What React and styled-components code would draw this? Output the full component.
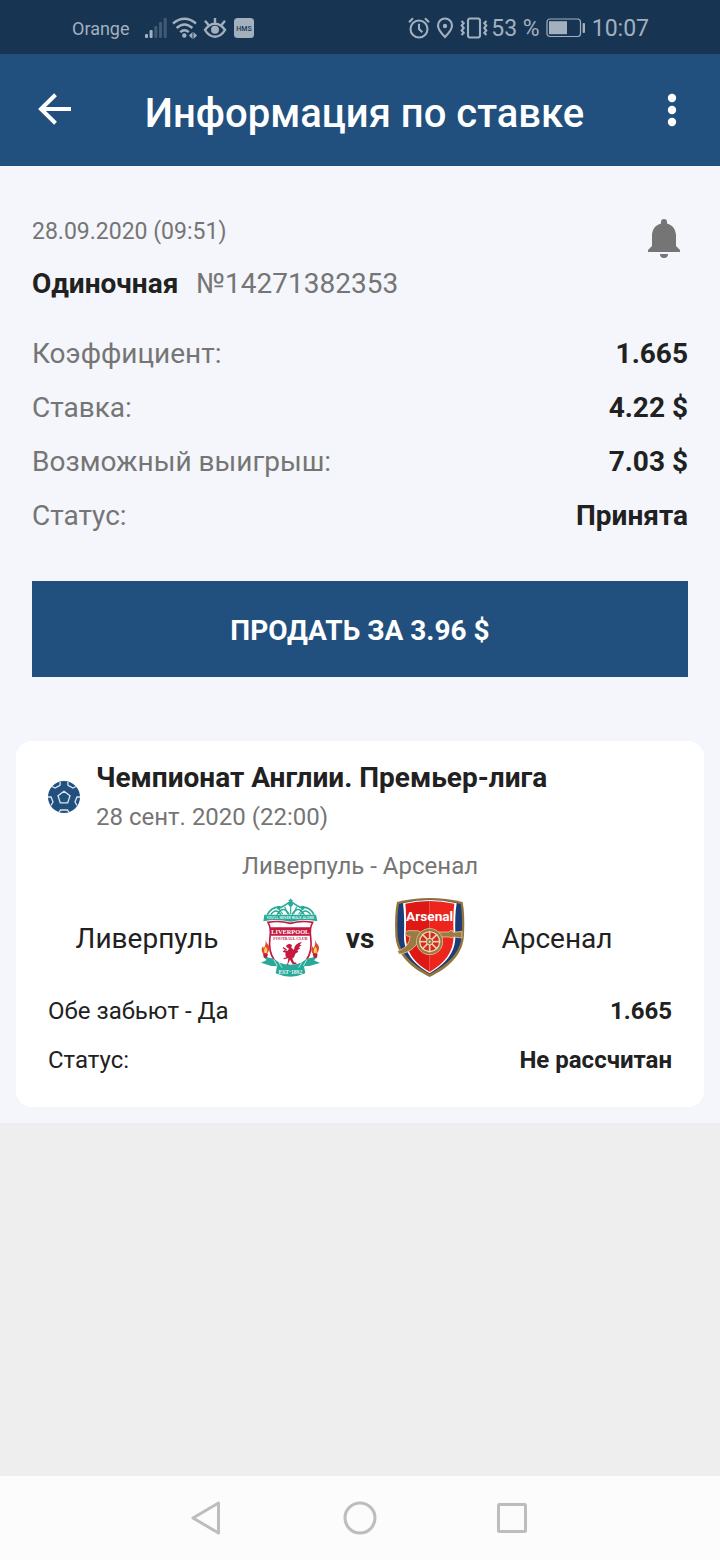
import React from 'react';
import styled, { createGlobalStyle } from 'styled-components';

const GlobalStyle = createGlobalStyle`
  * {
    box-sizing: border-box;
  }
  body {
    margin: 0;
    background-color: #eeeeee;
    font-family: Roboto, "Liberation Sans", sans-serif;
    color: #212121;
  }
`

const Screen = styled.div`
  display: flex;
  flex-direction: column;
  min-height: 100vh;
`
const StatusBar = styled.div`
  display: flex;
  align-items: center;
  justify-content: space-between;
  height: 54px;
  padding: 2px 71px 0 72px;
  background-color: #173553;
  color: #a3b0be;
`
const StatusGroup = styled.div`
  display: flex;
  align-items: center;
`
const Carrier = styled.span`
  font-size: 18px;
  margin-right: 15px;
`
const StatusText = styled.span`
  font-size: 23px;
  white-space: pre;
`
const AppBar = styled.header`
  display: flex;
  align-items: center;
  height: 112px;
  padding: 0 24px 0 31px;
  background-color: #21507f;
  color: #fff;
`
const IconButton = styled.button`
  display: flex;
  padding: 0;
  border: none;
  background: none;
  color: inherit;
  cursor: pointer;
`
const PageTitle = styled.h1`
  flex: 1;
  margin: 0;
  padding: 8px 0 0 2px;
  font-size: 40px;
  line-height: 48px;
  font-weight: 500;
  text-align: center;
`
const Content = styled.main`
  padding: 48px 16px 16px;
  background-color: #f4f6fb;
`
const BetInfo = styled.section`
  padding: 0 16px;
`
const BetHead = styled.div`
  display: flex;
  align-items: flex-start;
  justify-content: space-between;
  color: #757575;
`
const BetDate = styled.div`
  font-size: 23px;
  line-height: 36px;
`
const BetNumber = styled.div`
  display: flex;
  gap: 18px;
  margin-top: 16px;
  font-size: 28px;
  line-height: 36px;
`
const BetType = styled.span`
  font-weight: 700;
  color: #212121;
`
const Rows = styled.dl`
  margin: ${props => props.$small ? '0' : '24px 0 39px'};
  font-size: ${props => props.$small ? '24px' : '28px'};
  color: ${props => props.$small ? '#212121' : '#757575'};
`
const Row = styled.div`
  display: flex;
  align-items: center;
  justify-content: space-between;
  height: ${props => props.$small ? '49px' : '54px'};
`
const Value = styled.dd`
  margin: 0;
  font-weight: 700;
  color: #212121;
`
const SellButton = styled.button`
  width: 100%;
  height: 96px;
  padding: 2px 0 0;
  border: none;
  background-color: #21507f;
  color: #fff;
  font-family: inherit;
  font-size: 28px;
  font-weight: 700;
  cursor: pointer;
`
const Card = styled.section`
  margin-top: 64px;
  padding: 19px 32px 23px;
  border-radius: 16px;
  background-color: #fff;
`
const League = styled.div`
  display: flex;
  align-items: center;
  gap: 16px;
`
const LeagueName = styled.h2`
  margin: 0;
  font-size: 28px;
  line-height: 36px;
  font-weight: 700;
`
const GameDate = styled.div`
  margin-top: 5px;
  font-size: 24px;
  line-height: 32px;
  color: #757575;
`
const GameName = styled.div`
  margin-top: 17px;
  font-size: 24px;
  line-height: 32px;
  text-align: center;
  color: #757575;
`
const Teams = styled.div`
  display: grid;
  grid-template-columns: 1fr 80px 60px 80px 1fr;
  align-items: center;
  margin: 16px 0 8px;
  font-size: 28px;
  text-align: center;
`
const Team = styled.div`
  padding-right: ${props => props.$away ? '28px' : '4px'};
`
const Versus = styled.div`
  font-weight: 700;
`
const NavBar = styled.nav`
  display: flex;
  align-items: center;
  justify-content: center;
  gap: 104px;
  height: 84px;
  margin-top: auto;
  background-color: #fcfcfc;
  color: #bdbdbd;
`

const SignalIcon = () => (
  <svg width="22" height="22" viewBox="0 0 22 22" fill="currentColor">
    <rect x="0" y="17" width="3" height="4" rx="1" />
    <rect x="4.6" y="13" width="3" height="8" rx="1" />
    <g opacity=".3">
      <rect x="9.3" y="9" width="3" height="12" rx="1" />
      <rect x="14" y="5" width="3" height="16" rx="1" />
      <rect x="18.7" y="1" width="3" height="20" rx="1" />
    </g>
  </svg>
)

const WifiIcon = () => (
  <svg width="33" height="22" viewBox="-5 0 33 22" fill="none" stroke="currentColor" strokeWidth="2.4">
    <path d="M1 6.5Q12.5-3 24 6.5M4.6 11Q12.5 3.8 20.4 11M8.2 15.2Q12.5 11.2 16.8 15.2" />
    <circle cx="12.3" cy="18.5" r="2.2" fill="currentColor" stroke="none" />
    <path d="M17 18.5l3.500-3.500v7zM25 18.5l-3.500-3.500v7z" fill="currentColor" stroke="none" />
  </svg>
)

const EyeIcon = () => (
  <svg width="30" height="22" viewBox="-4 0 30 22" fill="none" stroke="currentColor" strokeWidth="2.4">
    <path d="M1 13Q5 6.7 11 6.7T21 13Q17 19.7 11 19.7T1 13z" />
    <circle cx="11" cy="12.7" r="4" fill="currentColor" stroke="none" />
    <path d="M11 6V1M4.5 8L1 3.8M17.5 8L21 3.8" />
  </svg>
)

const HmsIcon = () => (
  <svg width="24" height="22" viewBox="-4 0 24 22">
    <rect y="1" width="20" height="20" rx="3.5" fill="currentColor" />
    <text x="10" y="13.5" fontSize="7" fontWeight="500" textAnchor="middle" fill="#173553">HMS</text>
  </svg>
)

const AlarmIcon = () => (
  <svg width="22" height="22" viewBox="0 0 22 22" fill="none" stroke="currentColor" strokeWidth="2.1">
    <circle cx="11" cy="12" r="8.5" />
    <path d="M11 6.8V12l3.3 3.3M1 5.2L5 1.3M21 5.2L17 1.3" />
  </svg>
)

const PinIcon = () => (
  <svg width="27" height="22" viewBox="-6 0 27 22" fill="none" stroke="currentColor" strokeWidth="2.1">
    <path d="M9 20Q2 13 2 8.5a7 7 0 0 1 14 0Q16 13 9 20z" />
    <circle cx="9" cy="9" r="2.2" fill="currentColor" stroke="none" />
  </svg>
)

const VibrateIcon = () => (
  <svg width="34" height="22" viewBox="-3 0 34 22" fill="none" stroke="currentColor" strokeWidth="2.1">
    <rect x="8" y="1.500" width="12" height="19" rx="2" />
    <path d="M1.500 4l2.200 2-2 2.500 2 2.500-2 2.500 2 2.500-2.200 2M26.500 4l-2.200 2 2 2.500-2 2.500 2 2.500-2 2.500 2.200 2" />
  </svg>
)

const BatteryIcon = () => (
  <svg width="52" height="22" viewBox="-6 0 52 22">
    <rect x="1" y="2" width="33.5" height="17.5" rx="3" fill="none" stroke="currentColor" strokeWidth="1.2" />
    <rect x="3" y="4.2" width="18" height="13" fill="currentColor" />
    <rect x="36.6" y="6" width="2.4" height="10" rx="1" fill="currentColor" />
  </svg>
)

const BackIcon = () => (
  <svg width="48" height="48" viewBox="0 0 48 48" fill="none" stroke="currentColor" strokeWidth="4">
    <path d="M40 23H10M24.5 8.8L10 23l14.5 14.2" />
  </svg>
)

const MoreIcon = () => (
  <svg width="48" height="48" viewBox="0 0 48 48" fill="currentColor">
    <circle cx="24" cy="12" r="4.2" />
    <circle cx="24" cy="24" r="4.2" />
    <circle cx="24" cy="36" r="4.2" />
  </svg>
)

const BellIcon = () => (
  <svg width="48" height="48" viewBox="0 0 48 48" fill="currentColor">
    <path d="M24 5a3 3 0 0 0-3 3v1.4C15.5 10.8 12 15.5 12 21.5V32l-4 4v2h32v-2l-4-4V21.5c0-6-3.5-10.7-9-12.1V8a3 3 0 0 0-3-3zM20 40a4 4 0 0 0 8 0z" />
  </svg>
)

const BallIcon = () => (
  <svg width="32" height="32" viewBox="0 0 32 32">
    <circle cx="16" cy="16" r="16" fill="#21507f" />
    <path
      d="M16 10.3l6 4.400-2.300 7.200h-7.400L10 14.700zM4 5.500l3 1.500 5-2.700.2-3.300M28 5.500l-3 1.500-5-2.700-.2-3.300M0 16h3l2 5-2 3.500M32 16h-3l-2 5 2 3.500M11 31.200l1.600-2.200h6.800l1.600 2.200"
      fill="none"
      stroke="#dce8f2"
      strokeWidth="1.3"
    />
  </svg>
)

const LiverpoolCrest = () => (
  <svg width="80" height="80" viewBox="0 38 240 240" role="img" aria-label="Ливерпуль">
    <g fill="none" stroke="#28a999" strokeWidth="5">
      <path d="M52 88Q66 61 94 66Q108 58 122 48Q136 58 150 66Q178 61 192 88" />
      <path d="M62 88Q79 66 93 88M81 88Q100 57 118 88M126 88Q144 57 163 88M151 88Q166 66 182 88" strokeWidth="4" />
      <path d="M122 40v46M116 45h12M84 68l14 18M160 68l-14 18M104 64l9 22M140 64l-9 22" strokeWidth="3.5" />
    </g>
    <g fill="#28a999">
      <circle cx="122" cy="57" r="7" />
      <circle cx="86" cy="67" r="6" />
      <circle cx="158" cy="67" r="6" />
      <path d="M43 88H198L202 108Q161 100 122 109Q80 100 40 108z" />
    </g>
    <text x="121" y="102" fontSize="11" fontWeight="700" textAnchor="middle" fill="#d6f2ec">YOU’LL NEVER WALK ALONE</text>
    <path d="M54 111Q88 105 121 114Q154 105 188 111Q178 128 182 155Q188 200 168 226Q150 244 121 257Q91 244 74 226Q54 200 60 155Q64 128 54 111z" fill="#fff" stroke="#c5193f" strokeWidth="5" />
    <path d="M61 126H181V151H61z" fill="#c5193f" />
    <text x="121" y="146" fontSize="19" fontWeight="700" fontFamily="Liberation Serif, serif" textAnchor="middle" fill="#fff">LIVERPOOL</text>
    <text x="121" y="164" fontSize="12" fontWeight="700" fontFamily="Liberation Serif, serif" textAnchor="middle" fill="#c5193f">FOOTBALL CLUB</text>
    <path d="M109 180l9-5 8 4-2 8 8 7q0-20 24-25l-7 9 6 2-9 6 5 3-9 6 3 4-9 6q-2 11-9 15l5 11 7 1v5h-11l-8-14-6 13 5 7-9 3-4-2 7-11 2-14q-12-5-8-17l-9-3 5-5 9 3 5-7-8-5z" fill="#c5193f" />
    <path d="M110 194l-11-7M114 217l-13 3" stroke="#c5193f" strokeWidth="4" />
    <path d="M38 213l33 7 17 12q33 12 66 0l17-12 33-7-12 12 18 8-32 9-16 1 4 21q-45 20-89 0l4-21-17-1-31-10 17-8z" fill="#28a999" />
    <path d="M87 232l9 15M155 232l-9 15M71 222l11 20M171 222l-11 20" stroke="#fff" strokeWidth="2" />
    <text x="121" y="265" fontSize="17" fontWeight="700" fontFamily="Liberation Serif, serif" textAnchor="middle" fill="#e2f6f2">EST·1892</text>
    {[46, 195].map(x => (
      <g key={x} transform={`translate(${x} 0)`}>
        <path d="M1 163q2 12 9 17 5 11-2 21l-5 7h-7q-10-10-6-20l3-6 2 7q7-9 6-26z" fill="#e1492d" />
        <path d="M1 184q8 9 3 19h-6q-5-8 3-19z" fill="#ffd35a" />
        <path d="M-7 205H8L5 217h-9z" fill="#c5193f" />
      </g>
    ))}
  </svg>
)

const ArsenalCrest = () => (
  <svg width="80" height="80" viewBox="15 39 240 240" role="img" aria-label="Арсенал">
    <path d="M36 51Q84 39 134 39T233 51Q240 88 237 151C234 210 190 249 134 276C78 249 34 210 31 151Q28 88 36 51z" fill="#92733a" />
    <path d="M42 57Q86 44 134 44T227 57Q233 90 230 150C227 204 185 240 134 267C83 240 41 204 38 150Q35 90 42 57z" fill="#1b3c76" />
    <path d="M54 55Q94 45 134 45T215 55Q209 91 211 151C213 203 180 239 134 265C88 239 55 203 57 151Q59 91 54 55z" fill="#fff" />
    <path d="M61 56Q96 48 134 48V261C89 235 62 202 62 151Q65 90 61 56z" fill="#dd1815" />
    <path d="M134 48Q172 48 208 56Q203 90 206 151C206 202 179 235 134 261z" fill="#ee251d" />
    <text x="134" y="109" fontSize="41" fontWeight="700" textAnchor="middle" fill="#fff">Arsenal</text>
    <path d="M61 141l8-4h29l8 4h86q4-7 11-4l2 5 26-3v20l-26-3q-7 5-12 0h-29l-68 20q-14 22-44 30l-10 1-4-9 12-5q24-13 25-39H69l-8-4z" fill="#9a7c43" stroke="#f2dfbd" strokeWidth="2" />
    <circle cx="134" cy="170" r="34" fill="#d82720" stroke="#f2dfbd" strokeWidth="12" />
    <circle cx="134" cy="170" r="35" fill="none" stroke="#9a7c43" strokeWidth="7" />
    {[0, 45, 90, 135].map(angle => (
      <path key={angle} d="M134 138v64" stroke="#ead5aa" strokeWidth="5" transform={`rotate(${angle} 134 170)`} />
    ))}
    <circle cx="134" cy="170" r="10" fill="#9a7c43" stroke="#f2dfbd" strokeWidth="3" />
    <circle cx="134" cy="170" r="3" fill="#f2dfbd" />
  </svg>
)

const betRows = [
  ['Коэффициент:', '1.665'],
  ['Ставка:', '4.22 $'],
  ['Возможный выигрыш:', '7.03 $'],
  ['Статус:', 'Принята'],
]

const gameRows = [
  ['Обе забьют - Да', '1.665'],
  ['Статус:', 'Не рассчитан'],
]

const Details = ({ rows, small }) => (
  <Rows $small={small}>
    {rows.map(([label, value]) => (
      <Row key={label} $small={small}>
        <dt>{label}</dt>
        <Value>{value}</Value>
      </Row>
    ))}
  </Rows>
)

const App = () => (
  <Screen>
    <GlobalStyle />
    <StatusBar>
      <StatusGroup>
        <Carrier>Orange</Carrier>
        <SignalIcon />
        <WifiIcon />
        <EyeIcon />
        <HmsIcon />
      </StatusGroup>
      <StatusGroup>
        <AlarmIcon />
        <PinIcon />
        <VibrateIcon />
        <StatusText>53 %</StatusText>
        <BatteryIcon />
        <StatusText>10:07</StatusText>
      </StatusGroup>
    </StatusBar>
    <AppBar>
      <IconButton aria-label="Назад"><BackIcon /></IconButton>
      <PageTitle>Информация по ставке</PageTitle>
      <IconButton aria-label="Меню"><MoreIcon /></IconButton>
    </AppBar>
    <Content>
      <BetInfo>
        <BetHead>
          <div>
            <BetDate>28.09.2020 (09:51)</BetDate>
            <BetNumber>
              <BetType>Одиночная</BetType>
              <span>№14271382353</span>
            </BetNumber>
          </div>
          <IconButton aria-label="Уведомления"><BellIcon /></IconButton>
        </BetHead>
        <Details rows={betRows} />
        <SellButton>ПРОДАТЬ ЗА 3.96 $</SellButton>
      </BetInfo>
      <Card>
        <League>
          <BallIcon />
          <div>
            <LeagueName>Чемпионат Англии. Премьер-лига</LeagueName>
            <GameDate>28 сент. 2020 (22:00)</GameDate>
          </div>
        </League>
        <GameName>Ливерпуль - Арсенал</GameName>
        <Teams>
          <Team>Ливерпуль</Team>
          <LiverpoolCrest />
          <Versus>vs</Versus>
          <ArsenalCrest />
          <Team $away>Арсенал</Team>
        </Teams>
        <Details rows={gameRows} small />
      </Card>
    </Content>
    <NavBar>
      <IconButton aria-label="Назад">
        <svg width="48" height="48" viewBox="0 0 48 48" fill="none" stroke="currentColor" strokeWidth="3" strokeLinejoin="round">
          <path d="M34.5 9v30L9 24z" />
        </svg>
      </IconButton>
      <IconButton aria-label="Домой">
        <svg width="48" height="48" viewBox="0 0 48 48" fill="none" stroke="currentColor" strokeWidth="3">
          <circle cx="24" cy="24" r="15" />
        </svg>
      </IconButton>
      <IconButton aria-label="Недавние">
        <svg width="48" height="48" viewBox="0 0 48 48" fill="none" stroke="currentColor" strokeWidth="3">
          <rect x="10.5" y="10.5" width="27" height="27" rx="1" />
        </svg>
      </IconButton>
    </NavBar>
  </Screen>
)

export default App;
